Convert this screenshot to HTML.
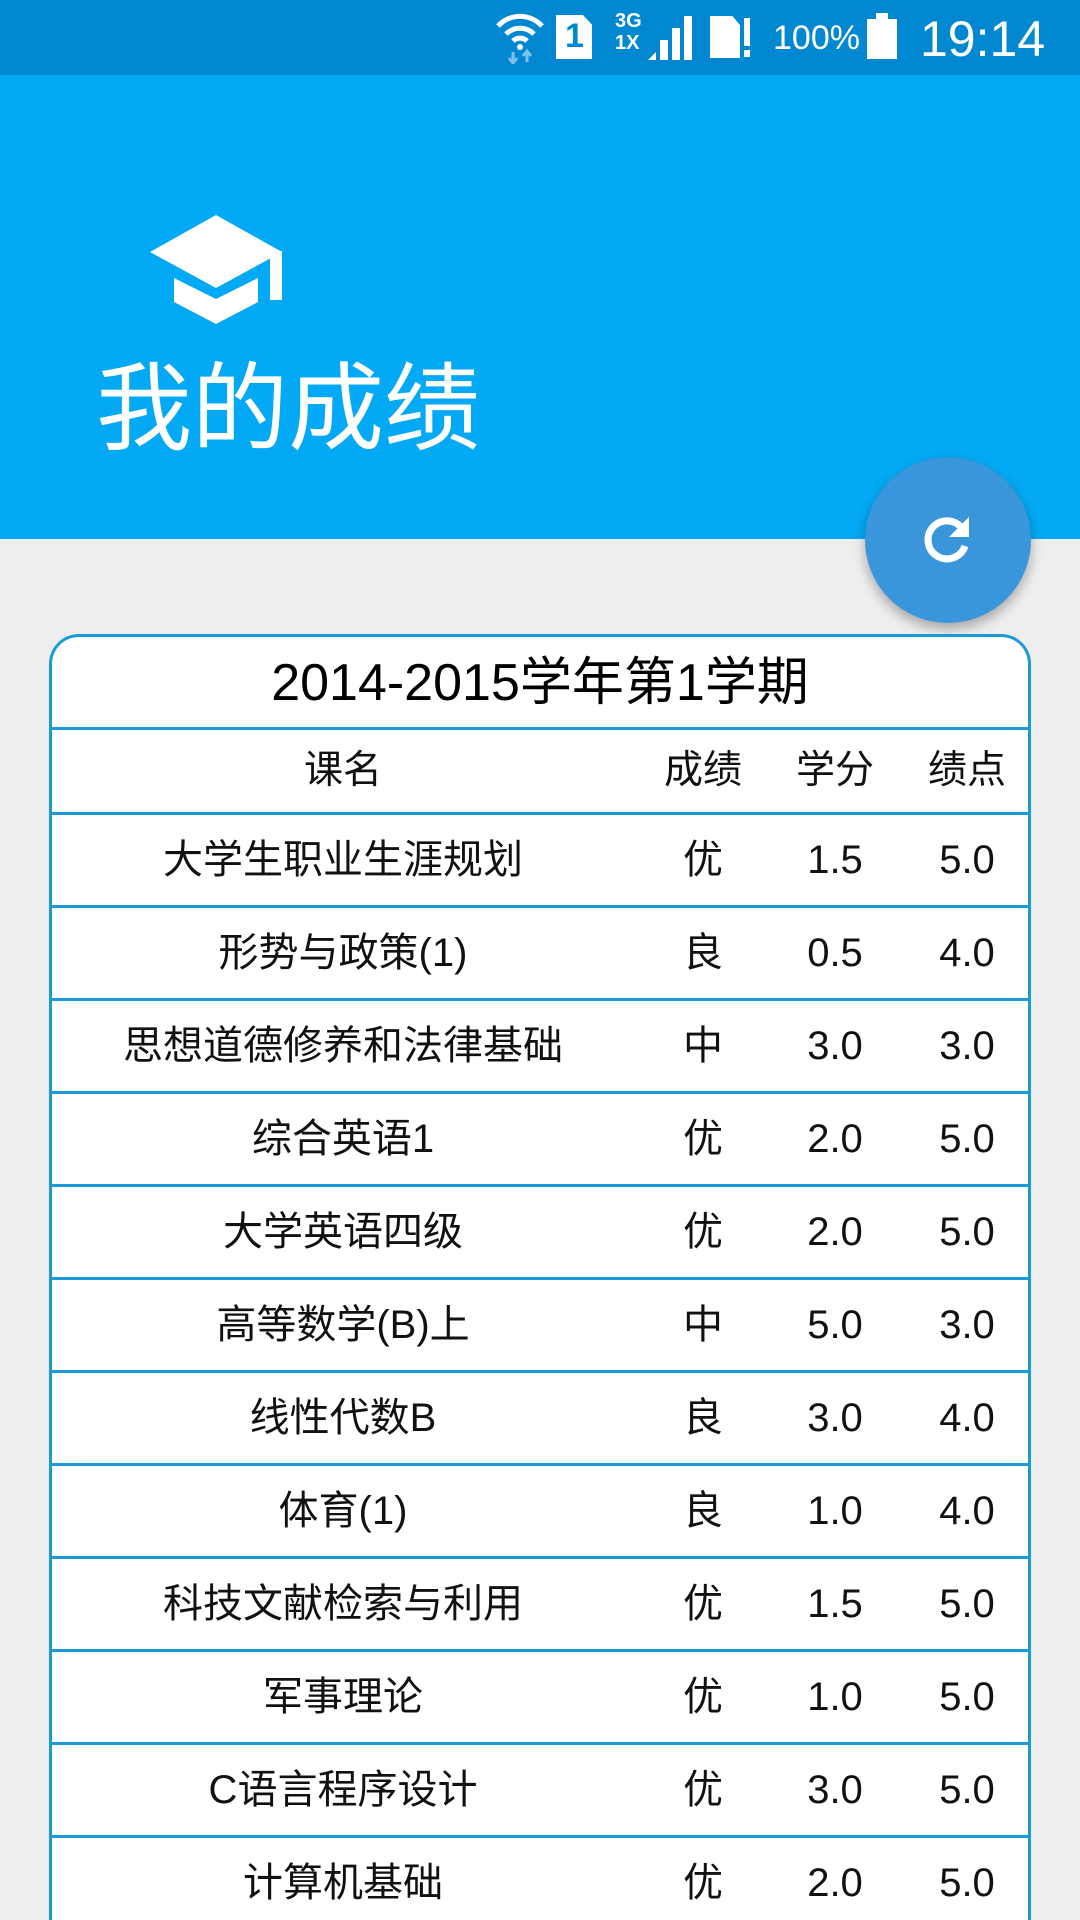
<!DOCTYPE html>
<html><head><meta charset="utf-8"><style>
*{margin:0;padding:0;box-sizing:border-box}
html{width:1080px;height:1920px;overflow:hidden}
body{width:1080px;height:1920px;overflow:hidden;background:#eeeeee;font-family:"Liberation Sans","Noto Sans CJK SC",sans-serif;position:relative}
.sb{position:absolute;left:0;top:0;width:1080px;height:75px;background:#0288d1;color:#fff}
.hd{position:absolute;left:0;top:75px;width:1080px;height:464px;background:#03a9f4}
.title{position:absolute;left:96px;top:280px;font-size:96px;color:#fff;line-height:110px}
.fab{position:absolute;left:865px;top:457px;width:166px;height:166px;border-radius:50%;background:#3996db;box-shadow:0 6px 12px rgba(0,0,0,.3)}
.card{position:absolute;left:49px;top:634px;width:982px;height:1286px;background:#fff;border:3px solid #1a9ad6;border-bottom:none;border-radius:30px 30px 0 0;overflow:hidden}
.cap{height:93px;border-bottom:3px solid #1a9ad6;text-align:center;font-size:52px;line-height:93px;color:#000}
.row{height:93px;border-bottom:3px solid #1a9ad6;position:relative;font-size:40px;color:#111}
.row.h{height:85px;font-size:39px}
.row span{position:absolute;top:0;line-height:90px;transform:translateX(-50%);white-space:nowrap}
.h span{line-height:82px}
</style></head><body>
<div class="sb">
<svg style="position:absolute;left:494px;top:10px" width="52" height="54" viewBox="0 0 52 54"><path d="M4 16 A30 30 0 0 1 48 16" stroke="#fff" stroke-width="5" fill="none"/><path d="M12 24 A20 20 0 0 1 40 24" stroke="#fff" stroke-width="5" fill="none"/><path d="M19 31 A10 10 0 0 1 33 31" stroke="#fff" stroke-width="5" fill="none"/><circle cx="26" cy="37" r="3" fill="#fff"/><path d="M19 42v10M15 48l4 5 4-5M33 52V42M29 46l4-5 4 5" stroke="#7fc0ea" stroke-width="3" fill="none"/></svg>
<div style="position:absolute;left:556px;top:15px;width:36px;height:44px;background:#fff;clip-path:polygon(0 0,75% 0,100% 22%,100% 100%,0 100%)"><span style="position:absolute;left:9px;top:2px;font-size:34px;font-weight:bold;color:#0288d1">1</span></div>
<div style="position:absolute;left:615px;top:10px;font-size:20px;font-weight:bold;line-height:22px">3G<br>1X</div>
<svg style="position:absolute;left:648px;top:14px" width="48" height="46"><path d="M0 46h8v-8zM12 46h8v-20h-8zM24 46h8V14h-8zM36 46h8V2h-8z" fill="#fff"/></svg>
<div style="position:absolute;left:710px;top:16px;width:30px;height:42px;background:#fff;clip-path:polygon(0 0,75% 0,100% 22%,100% 100%,0 100%)"></div>
<div style="position:absolute;left:744px;top:18px;width:6px;height:28px;background:#fff"></div><div style="position:absolute;left:744px;top:50px;width:6px;height:7px;background:#fff"></div>
<div style="position:absolute;left:773px;top:16px;font-size:34px;line-height:44px">100%</div>
<div style="position:absolute;left:867px;top:19px;width:30px;height:40px;background:#fff"></div><div style="position:absolute;left:876px;top:13px;width:12px;height:7px;background:#fff"></div>
<div style="position:absolute;left:920px;top:10px;font-size:50px;line-height:58px">19:14</div>
</div>
<div class="hd">
<div class="title">我的成绩</div>
</div>
<svg style="position:absolute;left:0;top:0" width="400" height="400" viewBox="0 0 400 400"><path d="M216 215 L282 252 L216 288 L150 252 Z" fill="#fff"/><path d="M174 278 L216 299 L258 278 L258 302 L216 324 L174 302 Z" fill="#fff"/><rect x="270" y="251" width="12" height="49" fill="#fff"/></svg>
<div class="fab"><svg style="position:absolute;left:56px;top:56px" width="54" height="54" viewBox="0 0 54 54"><path d="M40 14 A19 19 0 1 0 44 33" stroke="#fff" stroke-width="7" fill="none"/><path d="M48 4 L48 24 L28 24 Z" fill="#fff"/></svg></div>
<div class="card">
<div class="cap">2014-2015学年第1学期</div>
<div class="row h"><span style="left:291px">课名</span><span style="left:651px">成绩</span><span style="left:783px">学分</span><span style="left:915px">绩点</span></div>
<div class="row"><span style="left:291px">大学生职业生涯规划</span><span style="left:651px">优</span><span style="left:783px">1.5</span><span style="left:915px">5.0</span></div>
<div class="row"><span style="left:291px">形势与政策(1)</span><span style="left:651px">良</span><span style="left:783px">0.5</span><span style="left:915px">4.0</span></div>
<div class="row"><span style="left:291px">思想道德修养和法律基础</span><span style="left:651px">中</span><span style="left:783px">3.0</span><span style="left:915px">3.0</span></div>
<div class="row"><span style="left:291px">综合英语1</span><span style="left:651px">优</span><span style="left:783px">2.0</span><span style="left:915px">5.0</span></div>
<div class="row"><span style="left:291px">大学英语四级</span><span style="left:651px">优</span><span style="left:783px">2.0</span><span style="left:915px">5.0</span></div>
<div class="row"><span style="left:291px">高等数学(B)上</span><span style="left:651px">中</span><span style="left:783px">5.0</span><span style="left:915px">3.0</span></div>
<div class="row"><span style="left:291px">线性代数B</span><span style="left:651px">良</span><span style="left:783px">3.0</span><span style="left:915px">4.0</span></div>
<div class="row"><span style="left:291px">体育(1)</span><span style="left:651px">良</span><span style="left:783px">1.0</span><span style="left:915px">4.0</span></div>
<div class="row"><span style="left:291px">科技文献检索与利用</span><span style="left:651px">优</span><span style="left:783px">1.5</span><span style="left:915px">5.0</span></div>
<div class="row"><span style="left:291px">军事理论</span><span style="left:651px">优</span><span style="left:783px">1.0</span><span style="left:915px">5.0</span></div>
<div class="row"><span style="left:291px">C语言程序设计</span><span style="left:651px">优</span><span style="left:783px">3.0</span><span style="left:915px">5.0</span></div>
<div class="row"><span style="left:291px">计算机基础</span><span style="left:651px">优</span><span style="left:783px">2.0</span><span style="left:915px">5.0</span></div>
</div>
</body></html>
